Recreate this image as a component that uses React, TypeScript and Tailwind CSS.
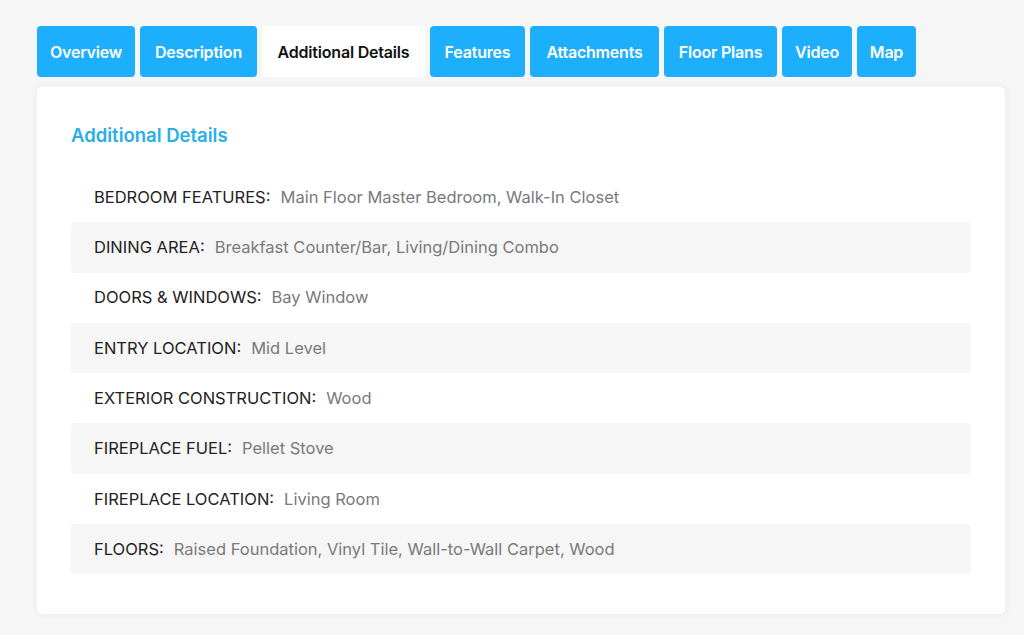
const tabs: [string, string][] = [
  ["Overview", "w-[98px]"],
  ["Description", "w-[117px]"],
  ["Additional Details", "w-[163px]"],
  ["Features", "w-[95px]"],
  ["Attachments", "w-[129px]"],
  ["Floor Plans", "w-[113px]"],
  ["Video", "w-[70px]"],
  ["Map", "w-[59px]"],
];

const details: [string, string][] = [
  ["BEDROOM FEATURES", "Main Floor Master Bedroom, Walk-In Closet"],
  ["DINING AREA", "Breakfast Counter/Bar, Living/Dining Combo"],
  ["DOORS & WINDOWS", "Bay Window"],
  ["ENTRY LOCATION", "Mid Level"],
  ["EXTERIOR CONSTRUCTION", "Wood"],
  ["FIREPLACE FUEL", "Pellet Stove"],
  ["FIREPLACE LOCATION", "Living Room"],
  ["FLOORS", "Raised Foundation, Vinyl Tile, Wall-to-Wall Carpet, Wood"],
];

export default function App() {
  const active = "Additional Details";

  return (
    <main
      className="min-h-[635px] bg-[#f6f6f6] pl-[37px] pr-[19px] pt-[26px]"
      style={{ fontFamily: "Inter, 'Noto Sans', sans-serif" }}
    >
      <div className="flex gap-[5px]">
        {tabs.map(([tab, width]) => (
          <div
            key={tab}
            className={`flex h-[51px] items-center justify-center rounded-[4px] text-[16px] font-semibold tracking-[-0.2px] ${width} ${
              tab === active ? "bg-white text-[#111]" : "bg-[#1eaffc] text-white"
            }`}
          >
            {tab}
          </div>
        ))}
      </div>

      <div className="mt-[10px] rounded-[5px] bg-white px-[34px] pb-[40px] pt-[36px] shadow-[0_0_8px_rgba(0,0,0,0.06)]">
        <h2 className="text-[18.5px] font-semibold leading-[24px] text-[#2aaee8]">
          Additional Details
        </h2>
        <ul className="mt-[25px]">
          {details.map(([label, value], i) => (
            <li
              key={label}
              className={`flex h-[50.3px] items-center rounded-[4px] px-[23px] text-[16.5px] ${
                i % 2 === 1 ? "bg-[#f6f6f6]" : ""
              }`}
            >
              <span className="text-[#222]">{label}:</span>
              <span className="ml-[10px] text-[#7a7a7a]">{value}</span>
            </li>
          ))}
        </ul>
      </div>
    </main>
  );
}
